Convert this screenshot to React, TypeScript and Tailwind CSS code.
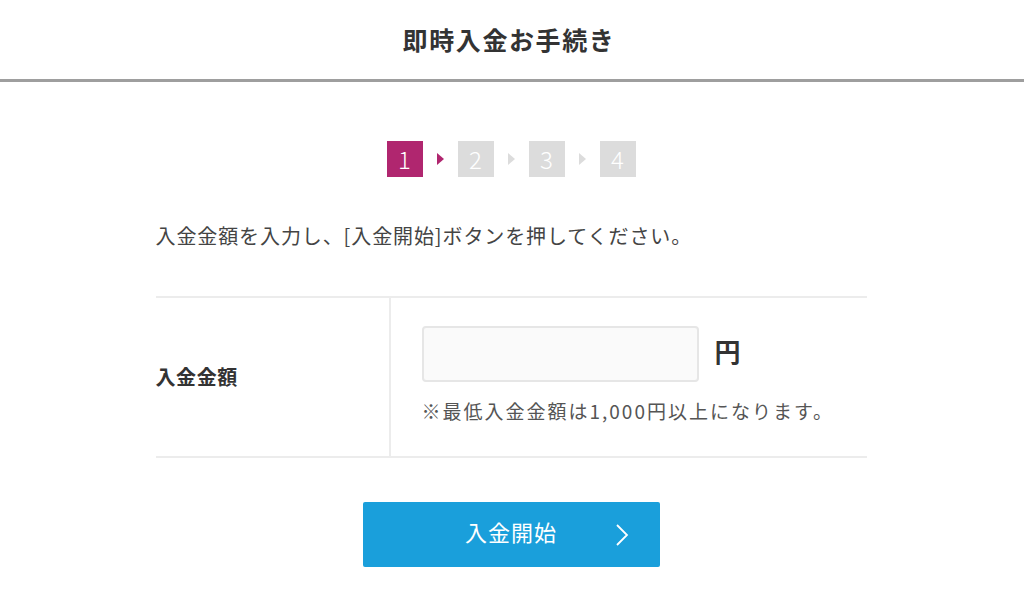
const font = "font-['Noto_Sans_CJK_JP','Noto_Sans',sans-serif]";

function Step({ n, active }: { n: number; active?: boolean }) {
  return (
    <div
      className={`flex h-9 w-9 items-center justify-center text-[24px] font-light leading-none text-white ${
        active ? "bg-[#b0266f]" : "bg-[#dcdcdc]"
      }`}
    >
      {n}
    </div>
  );
}

function Tri({ active }: { active?: boolean }) {
  return (
    <svg width="35" height="14" viewBox="0 0 35 14" aria-hidden>
      <path d="M14 1 L21 7 L14 13 Z" fill={active ? "#b0266f" : "#dcdcdc"} />
    </svg>
  );
}

export default function App() {
  return (
    <div className={`min-h-[605px] w-full bg-white text-[#333] ${font}`}>
      <header className="flex h-[82px] items-center justify-center border-b-[3px] border-[#9e9e9e]">
        <h1 className="-translate-x-[3px] text-[25px] font-bold tracking-[1.6px] text-[#333]">即時入金お手続き</h1>
      </header>

      <main className="mx-auto flex w-[711px] -translate-x-[1px] flex-col">
        <div className="mt-[59px] flex items-center justify-center">
          <Step n={1} active />
          <Tri active />
          <Step n={2} />
          <Tri />
          <Step n={3} />
          <Tri />
          <Step n={4} />
        </div>

        <p className="mt-[45px] text-[20px] leading-[28px] tracking-[0.9px] text-[#444]">
          入金金額を入力し、[入金開始]ボタンを押してください。
        </p>

        <div className="mt-[46px] flex border-y-2 border-[#ececec]">
          <div className="flex w-[235px] items-center border-r-2 border-[#ececec] text-[20px] font-bold tracking-[0.6px] text-[#333]">
            入金金額
          </div>
          <div className="flex flex-col pb-[33px] pl-[31px] pt-[28px]">
            <div className="flex items-center">
              <input
                type="text"
                className="h-[56px] w-[277px] rounded-[4px] border-2 border-[#e6e6e6] bg-[#fafafa] outline-none"
              />
              <span className="ml-[16px] -mt-[8px] text-[26px] font-bold text-[#333]">円</span>
            </div>
            <p className="mt-[17px] text-[19px] leading-[24px] tracking-[2px] text-[#555]">
              ※最低入金金額は1,000円以上になります。
            </p>
          </div>
        </div>

        <div className="mt-[44px] flex justify-center">
          <button className="relative flex h-[65px] w-[297px] items-center justify-center rounded-[2px] bg-[#1a9fdb] text-[22px] tracking-[1px] text-white">
            <span className="-mt-[6px]">入金開始</span>
            <svg
              className="absolute right-[31px] top-[21px]"
              width="14"
              height="24"
              viewBox="0 0 14 24"
              fill="none"
              stroke="white"
              strokeWidth="1.8"
            >
              <path d="M2 2 L12 12 L2 22" />
            </svg>
          </button>
        </div>
      </main>
    </div>
  );
}
